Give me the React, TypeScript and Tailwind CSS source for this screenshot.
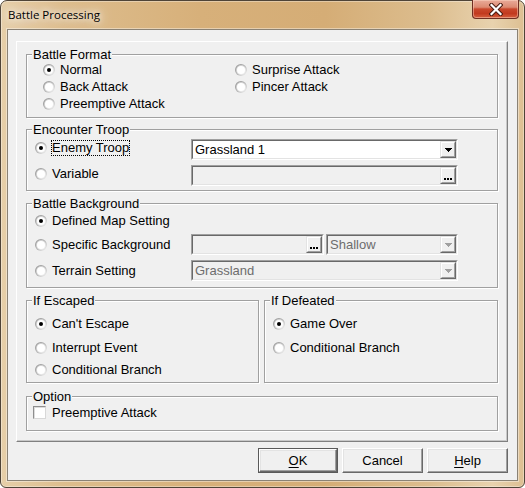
import React from "react";

function Radio({ checked }: { checked?: boolean }) {
  return (
    <svg width="12" height="12" viewBox="0 0 12 12" className="block shrink-0">
      <defs>
        <linearGradient id="rOuter" x1="0" y1="0" x2="1" y2="1">
          <stop offset="0" stopColor="#8f8f8f" />
          <stop offset="0.5" stopColor="#b4b4b4" />
          <stop offset="1" stopColor="#fbfbfb" />
        </linearGradient>
        <linearGradient id="rInner" x1="0" y1="0" x2="1" y2="1">
          <stop offset="0" stopColor="#c6c6c6" />
          <stop offset="1" stopColor="#f4f4f4" />
        </linearGradient>
      </defs>
      <circle cx="6" cy="6" r="6" fill="url(#rOuter)" />
      <circle cx="6" cy="6" r="5" fill="url(#rInner)" />
      <circle cx="6" cy="6" r="4" fill="#ffffff" />
      {checked && <circle cx="6" cy="6" r="2" fill="#000000" />}
    </svg>
  );
}

function RadioRow({ label, checked, focus }: { label: string; checked?: boolean; focus?: boolean }) {
  return (
    <div className="flex h-[17px] items-center">
      <Radio checked={checked} />
      {focus ? (
        <span className="ml-[4px] border border-dotted border-black leading-[14px] whitespace-nowrap">{label}</span>
      ) : (
        <span className="ml-[5px] leading-[17px] whitespace-nowrap">{label}</span>
      )}
    </div>
  );
}

function Group({ label, className, children }: { label: string; className: string; children?: React.ReactNode }) {
  return (
    <div className={`relative border border-[#a0a0a0] shadow-[inset_1px_1px_0_#ffffff,1px_1px_0_#ffffff] ${className}`}>
      <span className="absolute -top-[8px] left-[5px] bg-[#f0f0f0] px-[1px] leading-[15px] whitespace-nowrap">{label}</span>
      {children}
    </div>
  );
}

function Arrow({ disabled }: { disabled?: boolean }) {
  const c = disabled ? "#a0a0a0" : "#000000";
  return (
    <svg width="7" height="4" viewBox="0 0 7 4" className="block">
      <rect x="0" y="0" width="7" height="1" fill={c} />
      <rect x="1" y="1" width="5" height="1" fill={c} />
      <rect x="2" y="2" width="3" height="1" fill={c} />
      <rect x="3" y="3" width="1" height="1" fill={c} />
    </svg>
  );
}

function Dots() {
  return (
    <svg width="8" height="2" viewBox="0 0 8 2" className="block mt-[6px]">
      <rect x="0" y="0" width="2" height="2" fill="#000000" />
      <rect x="3" y="0" width="2" height="2" fill="#000000" />
      <rect x="6" y="0" width="2" height="2" fill="#000000" />
    </svg>
  );
}

function SmallBtn({ children }: { children: React.ReactNode }) {
  return (
    <div className="h-full w-[16px] shrink-0 border border-t-[#e3e3e3] border-l-[#e3e3e3] border-r-[#696969] border-b-[#696969]">
      <div className="flex h-full items-center justify-center border border-t-white border-l-white border-r-[#a0a0a0] border-b-[#a0a0a0] bg-[#f0f0f0]">
        {children}
      </div>
    </div>
  );
}

function Field({
  className,
  disabled,
  text,
  kind,
}: {
  className: string;
  disabled?: boolean;
  text?: string;
  kind: "drop" | "dots";
}) {
  return (
    <div
      className={`h-[21px] shrink-0 border border-t-[#a0a0a0] border-l-[#a0a0a0] border-r-white border-b-white ${className}`}
    >
      <div
        className={`flex h-full border border-t-[#696969] border-l-[#696969] border-r-[#e3e3e3] border-b-[#e3e3e3] ${
          disabled ? "bg-[#f0f0f0]" : "bg-white"
        }`}
      >
        <span
          className={`flex-1 overflow-hidden whitespace-nowrap pl-[2px] leading-[17px] ${
            disabled ? "text-[#6d6d6d]" : "text-black"
          }`}
        >
          {text}
        </span>
        <SmallBtn>{kind === "drop" ? <Arrow disabled={disabled} /> : <Dots />}</SmallBtn>
      </div>
    </div>
  );
}

function Checkbox() {
  return (
    <div className="h-[13px] w-[13px] shrink-0 border border-t-[#8e8e8e] border-l-[#8e8e8e] border-r-[#d8d8d8] border-b-[#d8d8d8] bg-white shadow-[inset_1px_1px_0_#dcdcdc]" />
  );
}

function DlgButton({ children, isDefault, className }: { children: React.ReactNode; isDefault?: boolean; className: string }) {
  const inner = (
    <div className="flex h-full w-full items-center justify-center border border-t-white border-l-white border-r-[#696969] border-b-[#696969] bg-[#f0f0f0] shadow-[inset_-1px_-1px_0_#a0a0a0,inset_1px_1px_0_#e3e3e3]">
      <span className="leading-[15px]">{children}</span>
    </div>
  );
  return (
    <div className={`h-[25px] shrink-0 ${isDefault ? "border border-[#5a5a5a]" : ""} ${className}`}>{inner}</div>
  );
}

function CloseButton() {
  return (
    <div className="absolute left-[472px] top-0 h-[19px] w-[47px] rounded-b-[4px] border border-t-0 border-[#6e2f22] bg-[linear-gradient(180deg,#e9ab99_0%,#dc8a72_40%,#c9482c_50%,#c23a1f_75%,#d6603f_100%)] shadow-[inset_0_0_0_1px_rgba(255,220,200,0.45)] flex items-center justify-center">
      <svg width="14" height="13" viewBox="0 0 14 13" className="block">
        <path d="M2.5 2 L11.5 11 M11.5 2 L2.5 11" stroke="#4a1c12" strokeWidth="4.2" strokeLinecap="square" />
        <path d="M2.5 2 L11.5 11 M11.5 2 L2.5 11" stroke="#ffffff" strokeWidth="2.2" strokeLinecap="square" />
      </svg>
    </div>
  );
}

export default function App() {
  return (
    <div className="relative h-[488px] w-[525px] font-['Liberation_Sans',Arial,sans-serif] text-[13px] text-black">
      <div className="flex h-full w-full flex-col rounded-t-[7px] rounded-b-[6px] border border-[#4f4437] bg-[linear-gradient(90deg,#e6cfa9_0%,#ddbd8d_12%,#d7b07a_38%,#d5ad76_62%,#dcbd8e_82%,#e8d2ae_94%,#ddbf92_100%)] shadow-[inset_0_0_0_1px_rgba(255,255,255,0.35)]">
        <div className="flex h-[28px] shrink-0 items-center pl-[7px]">
          <span className="font-['Open_Sans',sans-serif] text-[11.5px] text-black [text-shadow:0_0_6px_#ffffff,0_0_12px_#ffffff,0_0_18px_rgba(255,255,255,0.8)]">
            Battle Processing
          </span>
        </div>
        <div className="mx-[6px] mb-[6px] flex flex-1 flex-col border border-[#8a8275] bg-[#f0f0f0] shadow-[0_0_0_1px_rgba(255,255,255,0.4)]">
          <div className="ml-[8px] mr-[9px] mt-[11px] flex flex-col border border-t-white border-l-white border-r-[#808080] border-b-[#808080] px-[9px] pb-[10px] pt-[12px] shadow-[inset_-1px_-1px_0_#c8c8c8]">
            <Group label="Battle Format" className="pb-[5px] pt-[6px]">
              <div className="grid grid-cols-[192px_1fr] pl-[16px]">
                <RadioRow label="Normal" checked />
                <RadioRow label="Surprise Attack" />
                <RadioRow label="Back Attack" />
                <RadioRow label="Pincer Attack" />
                <RadioRow label="Preemptive Attack" />
                <div />
              </div>
            </Group>

            <Group label="Encounter Troop" className="mt-[11px] pb-[4px] pl-[8px] pt-[9px]">
              <div className="flex h-[21px]">
                <div className="w-[156px] shrink-0">
                  <RadioRow label="Enemy Troop" checked focus />
                </div>
                <Field className="w-[267px]" text="Grassland 1" kind="drop" />
              </div>
              <div className="mt-[5px] flex h-[21px]">
                <div className="w-[156px] shrink-0">
                  <RadioRow label="Variable" />
                </div>
                <Field className="w-[267px]" disabled kind="dots" />
              </div>
            </Group>

            <Group label="Battle Background" className="mt-[12px] pb-[6px] pl-[8px] pt-[8px]">
              <RadioRow label="Defined Map Setting" checked />
              <div className="mt-[5px] flex h-[21px] items-center">
                <div className="w-[156px] shrink-0">
                  <RadioRow label="Specific Background" />
                </div>
                <Field className="w-[133px]" disabled kind="dots" />
                <Field className="ml-[2px] w-[132px]" disabled text="Shallow" kind="drop" />
              </div>
              <div className="mt-[5px] flex h-[21px] items-center">
                <div className="w-[156px] shrink-0">
                  <RadioRow label="Terrain Setting" />
                </div>
                <Field className="w-[267px]" disabled text="Grassland" kind="drop" />
              </div>
            </Group>

            <div className="mt-[12px] flex gap-[5px]">
              <Group label="If Escaped" className="w-[233px] pb-[4px] pl-[8px] pt-[14px]">
                <RadioRow label="Can't Escape" checked />
                <div className="mt-[7px]">
                  <RadioRow label="Interrupt Event" />
                </div>
                <div className="mt-[5px]">
                  <RadioRow label="Conditional Branch" />
                </div>
              </Group>
              <Group label="If Defeated" className="w-[234px] pb-[4px] pl-[8px] pt-[14px]">
                <RadioRow label="Game Over" checked />
                <div className="mt-[7px]">
                  <RadioRow label="Conditional Branch" />
                </div>
              </Group>
            </div>

            <Group label="Option" className="mt-[13px] pb-[9px] pl-[6px] pt-[7px]">
              <div className="flex h-[17px] items-center">
                <Checkbox />
                <span className="ml-[6px] leading-[17px]">Preemptive Attack</span>
              </div>
            </Group>
          </div>

          <div className="mr-[9px] mt-[6px] flex justify-end gap-[4px]">
            <DlgButton isDefault className="w-[80px]">
              <span className="underline underline-offset-[2px]">O</span>K
            </DlgButton>
            <DlgButton className="w-[81px]">Cancel</DlgButton>
            <DlgButton className="w-[81px]">
              <span className="underline underline-offset-[2px]">H</span>elp
            </DlgButton>
          </div>
        </div>
      </div>
      <CloseButton />
    </div>
  );
}
